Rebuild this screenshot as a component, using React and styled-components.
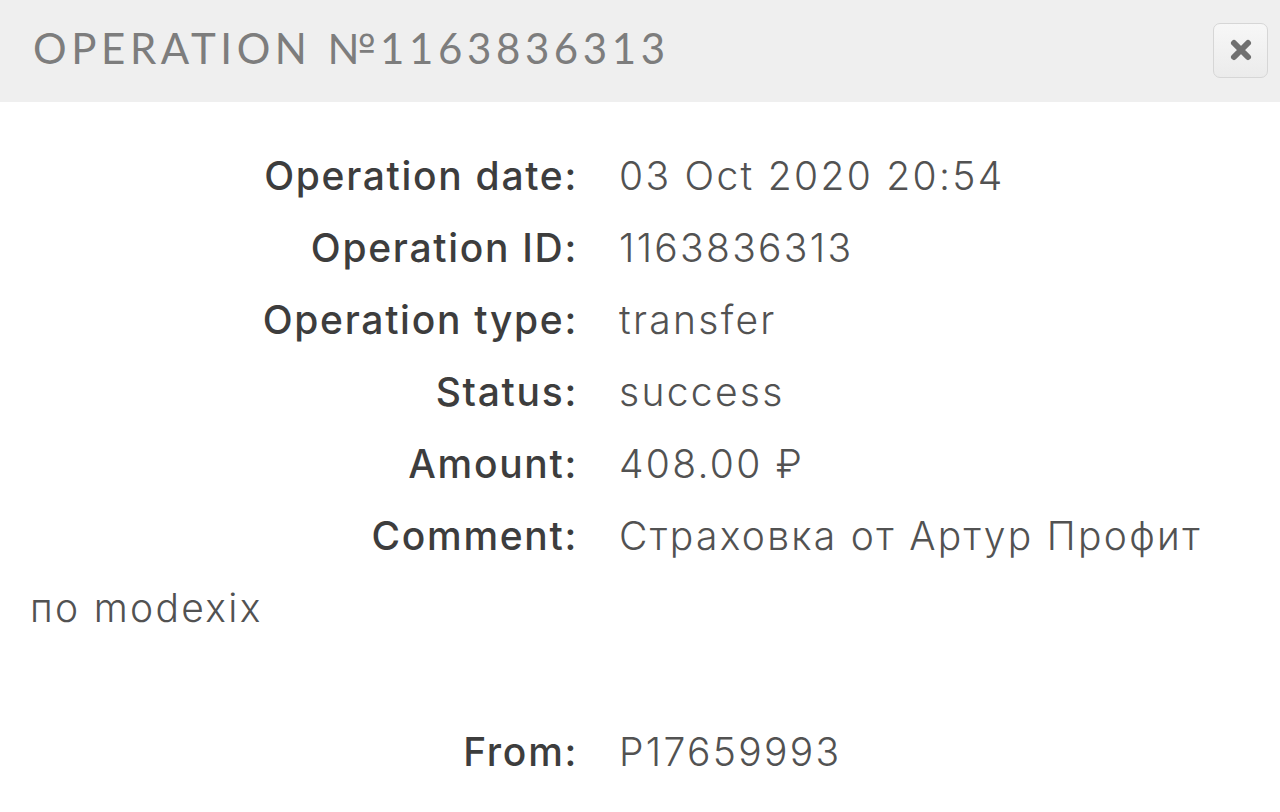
import React from "react";
import styled, { createGlobalStyle } from "styled-components";

const GlobalStyle = createGlobalStyle`
  html, body {
    margin: 0;
    padding: 0;
    background: #ffffff;
  }
  body {
    font-family: Inter, "Noto Sans", sans-serif;
  }
`;

const StyledPopup = styled.div`
  width: 1280px;
  height: 812px;
  overflow: hidden;
  background-color: #ffffff;
`;
const StyledHeader = styled.div`
  display: flex;
  align-items: center;
  justify-content: space-between;
  height: 102px;
  padding: 0 12px 0 33px;
  box-sizing: border-box;
  background-color: #efefef;
`;
const StyledTitle = styled.h2`
  margin: 0;
  padding-bottom: 6px;
  font-family: Lato, "Liberation Sans", sans-serif;
  font-weight: 400;
  font-size: 42px;
  letter-spacing: 4.6px;
  color: #7d7d7d;
`;
const StyledCloseBtn = styled.button`
  display: flex;
  align-items: center;
  justify-content: center;
  width: 55px;
  height: 55px;
  padding: 0;
  margin-bottom: 2px;
  border: 1px solid #d6d6d6;
  border-radius: 7px;
  background: linear-gradient(#f7f7f7, #ebebeb);
`;
const StyledBody = styled.div`
  padding: 38px 60px 0 30px;
  font-size: 39px;
  line-height: 72px;
  color: #4a4a4a;
`;
const StyledRow = styled.div`
  min-height: 72px;
`;
const StyledLabel = styled.span`
  display: inline-block;
  width: 548px;
  padding-right: 41px;
  text-align: right;
  font-weight: 500;
  letter-spacing: 1.7px;
  color: #3d3d3d;
`;
const StyledValue = styled.span`
  font-weight: 350;
  letter-spacing: 2.3px;
  color: #525252;
`;
const StyledSpacer = styled.div`
  height: 72px;
`;

const rows = [
  ["Operation date:", "03 Oct 2020 20:54"],
  ["Operation ID:", "1163836313"],
  ["Operation type:", "transfer"],
  ["Status:", "success"],
  ["Amount:", "408.00 ₽"],
  ["Comment:", "Страховка от Артур Профит по modexix"],
];

const App = () => (
  <StyledPopup>
    <GlobalStyle />
    <StyledHeader>
      <StyledTitle>OPERATION №1163836313</StyledTitle>
      <StyledCloseBtn type="button">
        <svg width="24" height="24" viewBox="0 0 24 24">
          <path d="M5 5 L19 19 M19 5 L5 19" stroke="#707070" strokeWidth="6" strokeLinecap="round" />
        </svg>
      </StyledCloseBtn>
    </StyledHeader>
    <StyledBody>
      {rows.map(([label, value]) => (
        <StyledRow key={label}>
          <StyledLabel>{label}</StyledLabel>
          <StyledValue>{value}</StyledValue>
        </StyledRow>
      ))}
      <StyledSpacer />
      <StyledRow>
        <StyledLabel>From:</StyledLabel>
        <StyledValue>P17659993</StyledValue>
      </StyledRow>
    </StyledBody>
  </StyledPopup>
);

export default App;
